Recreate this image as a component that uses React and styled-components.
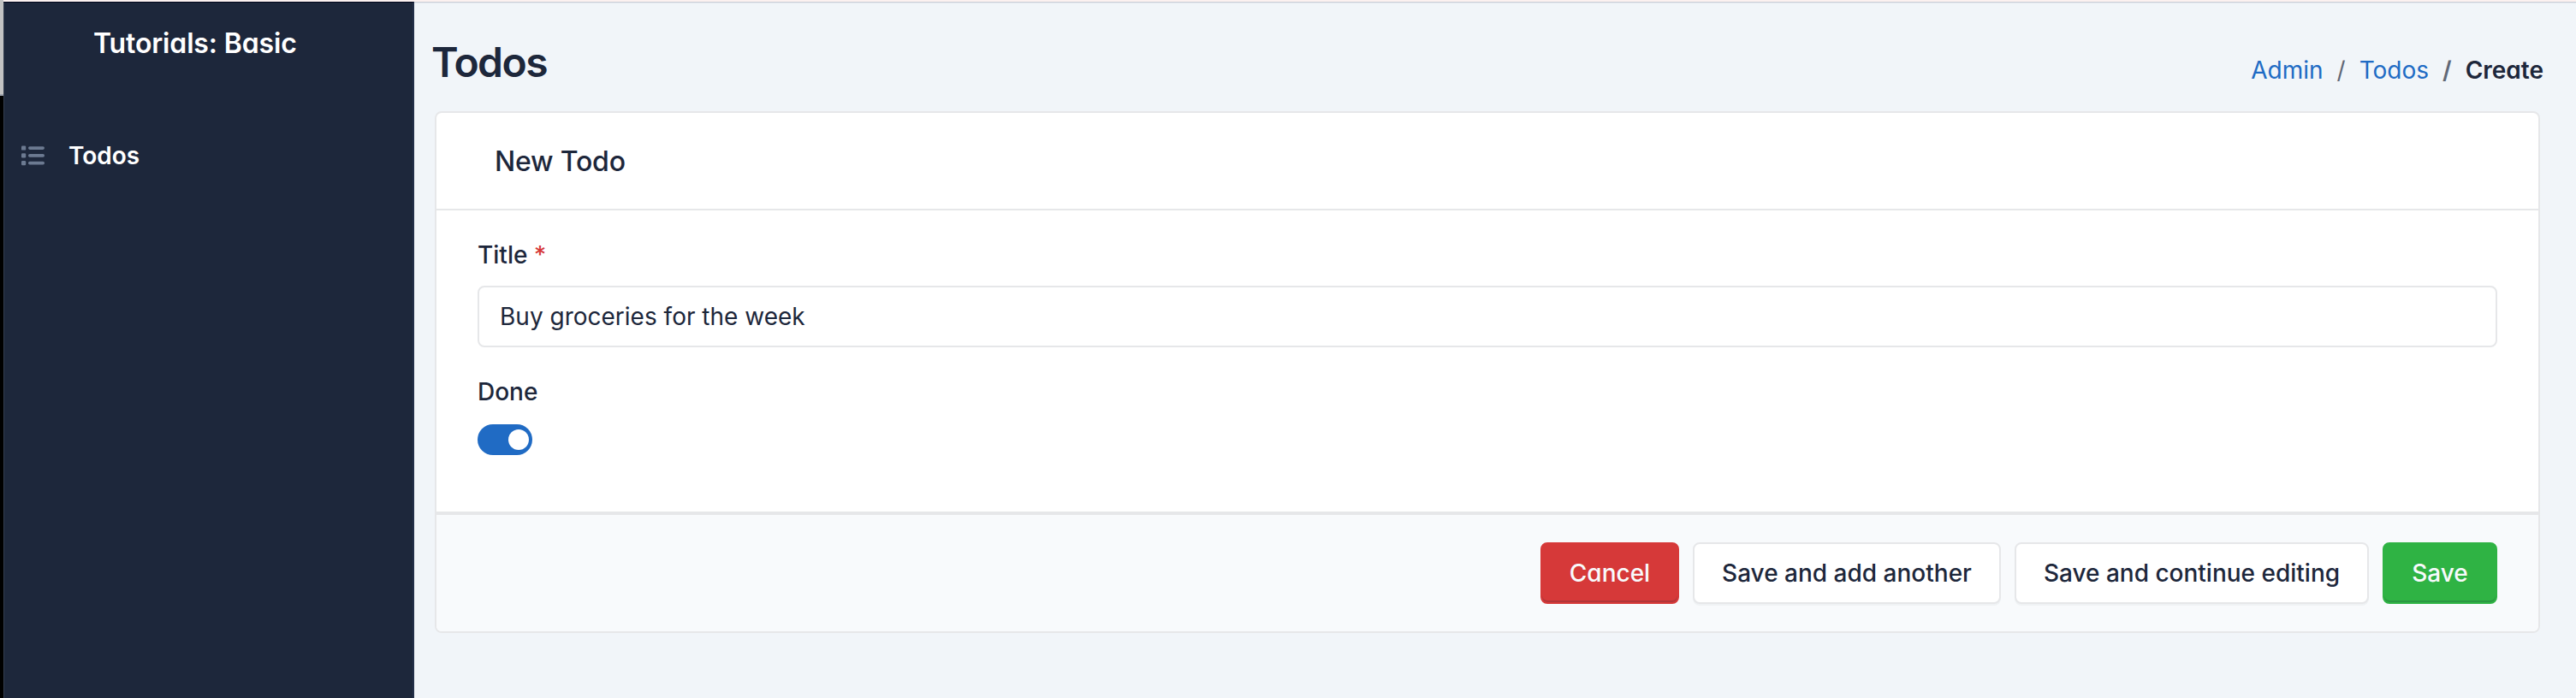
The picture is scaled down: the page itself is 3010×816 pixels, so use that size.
import React from "react";
import styled, { createGlobalStyle, css } from "styled-components";

const GlobalStyle = createGlobalStyle`
  *, *::before, *::after { box-sizing: border-box; }
  body {
    margin: 0;
    background: #f1f5f9;
    color: #1d273b;
    font-family: Inter, "Liberation Sans", sans-serif;
    font-size: 28px;
    line-height: 40px;
    font-feature-settings: "cv03", "cv04", "cv11";
    overflow: hidden;
  }
`;

const Screen = styled.div`
  display: flex;
  height: 816px;
`;

const DesktopEdge = styled.div`
  width: 4px;
  flex: none;
  background: linear-gradient(#c2c2c2 0 110px, #9da3ad 110px 112px, #000 112px);
`;

const Window = styled.div`
  flex: 1;
  display: flex;
  flex-direction: column;
  border-top: 2px solid #fcf1f0;
`;

const Layout = styled.div`
  flex: 1;
  display: flex;
`;

const Sidebar = styled.aside`
  width: 480px;
  flex: none;
  background: #1d273b;
  border-top: 1px solid #00051a;
  border-right: 2px solid #243049;
  box-shadow: inset 1px 0 #343d4f;
  color: #fff;
`;

const Brand = styled.div`
  margin: 24px 0 0 105px;
  font-size: 32px;
  line-height: 47px;
  font-weight: 600;
  letter-spacing: -0.15px;
  white-space: nowrap;
`;

const NavItem = styled.a`
  display: flex;
  align-items: center;
  gap: 28px;
  height: 40px;
  margin-top: 88px;
  padding-left: 20px;
  font-weight: 600;
`;

const NavIcon = styled.svg`
  width: 28px;
  height: 28px;
  fill: #6c7a91;
`;

const Main = styled.main`
  flex: 1;
  border-top: 1px solid #c9ced7;
  box-shadow: inset 0 1px #e6eaef;
  padding: 0 42px 0 24px;
`;

const PageHeader = styled.header`
  display: flex;
  justify-content: space-between;
  height: 127px;
  margin: 0 -4px 0 -5px;
`;

const PageTitle = styled.h1`
  margin: 40px 0 0 1px;
  font-size: 48px;
  line-height: 59px;
  font-weight: 600;
  letter-spacing: -1.55px;
`;

const Breadcrumb = styled.nav`
  display: flex;
  gap: 16px;
  margin-top: 59px;
`;

const Crumb = styled.span`
  color: ${(p) => (p.$active ? "#1d273b" : "#206bc4")};
  font-weight: ${(p) => (p.$active ? 600 : 400)};
`;

const Separator = styled.span`
  color: #616876;
  font-weight: ${(p) => (p.$active ? 600 : 400)};
`;

const Card = styled.form`
  border: 2px solid #e6e7e9;
  border-radius: 8px;
  background: #fff;
  overflow: hidden;
`;

const CardHeader = styled.div`
  height: 114px;
  padding: 33px 0 0 68px;
  border-bottom: 2px solid #e6e7e9;
  font-size: 32px;
  line-height: 47px;
  font-weight: 500;
  letter-spacing: -0.2px;
`;

const CardBody = styled.div`
  height: 352px;
  padding: 32px 48px 0;
`;

const Label = styled.label`
  display: block;
  font-weight: 500;
`;

const Required = styled.span`
  color: #d63939;
`;

const TextInput = styled.input`
  display: block;
  width: 100%;
  height: 72px;
  margin: 16px 0 32px;
  padding: 0 24px;
  border: 2px solid #e6e7e9;
  border-radius: 8px;
  background: #fff;
  color: #1d273b;
  font: inherit;
  outline: none;
`;

const Toggle = styled.div`
  display: flex;
  align-items: center;
  justify-content: flex-end;
  width: 64px;
  height: 36px;
  margin-top: 18px;
  padding-right: 4px;
  border-radius: 18px;
  background: #206bc4;
`;

const Knob = styled.span`
  width: 24px;
  height: 24px;
  border-radius: 50%;
  background: #fff;
`;

const CardFooter = styled.div`
  display: flex;
  justify-content: flex-end;
  gap: 16px;
  height: 140px;
  padding: 32px 48px;
  border-top: 4px solid #e6e7e9;
  background: #f8fafc;
`;

const filled = (color) => css`
  border-color: ${color};
  background: ${color};
  color: #f8fafc;
  box-shadow: inset 0 -2px 0 rgba(29, 39, 59, 0.2);
`;

const Button = styled.button`
  display: block;
  height: 72px;
  width: ${(p) => p.$width}px;
  padding: 0;
  border: 2px solid #e6e7e9;
  border-radius: 8px;
  background: #fff;
  color: #1d273b;
  font-family: inherit;
  font-size: 28px;
  font-weight: 500;
  line-height: 40px;
  text-align: center;
  white-space: nowrap;
  box-shadow: 0 2px 0 rgba(29, 39, 59, 0.04);
  ${(p) => p.$color && filled(p.$color)}
`;

const LinkButton = styled(Button)`
  padding: 14px 0;
`;

const rows = [3.2, 12, 20.8];

function ListIcon() {
  return (
    <NavIcon viewBox="0 0 28 28">
      {rows.map((y) => (
        <g key={y}>
          <rect x="1" y={y - 0.8} width="5.2" height="5.2" rx="1.2" />
          <rect x="9" y={y} width="19" height="3.7" rx="1.8" />
        </g>
      ))}
    </NavIcon>
  );
}

export default function App() {
  return (
    <>
      <GlobalStyle />
      <Screen>
        <DesktopEdge />
        <Window>
          <Layout>
            <Sidebar>
              <Brand>Tutorials: Basic</Brand>
              <NavItem>
                <ListIcon />
                Todos
              </NavItem>
            </Sidebar>
            <Main>
              <PageHeader>
                <PageTitle>Todos</PageTitle>
                <Breadcrumb>
                  <Crumb>Admin</Crumb>
                  <Separator>/</Separator>
                  <Crumb>Todos</Crumb>
                  <Separator $active>/</Separator>
                  <Crumb $active>Create</Crumb>
                </Breadcrumb>
              </PageHeader>
              <Card>
                <CardHeader>New Todo</CardHeader>
                <CardBody>
                  <Label>
                    Title <Required>*</Required>
                  </Label>
                  <TextInput defaultValue="Buy groceries for the week" />
                  <Label>Done</Label>
                  <Toggle>
                    <Knob />
                  </Toggle>
                </CardBody>
                <CardFooter>
                  <LinkButton as="a" $width={162} $color="#d63939">Cancel</LinkButton>
                  <Button type="button" $width={360}>Save and add another</Button>
                  <Button type="button" $width={414}>Save and continue editing</Button>
                  <Button type="button" $width={134} $color="#2fb344">Save</Button>
                </CardFooter>
              </Card>
            </Main>
          </Layout>
        </Window>
      </Screen>
    </>
  );
}
